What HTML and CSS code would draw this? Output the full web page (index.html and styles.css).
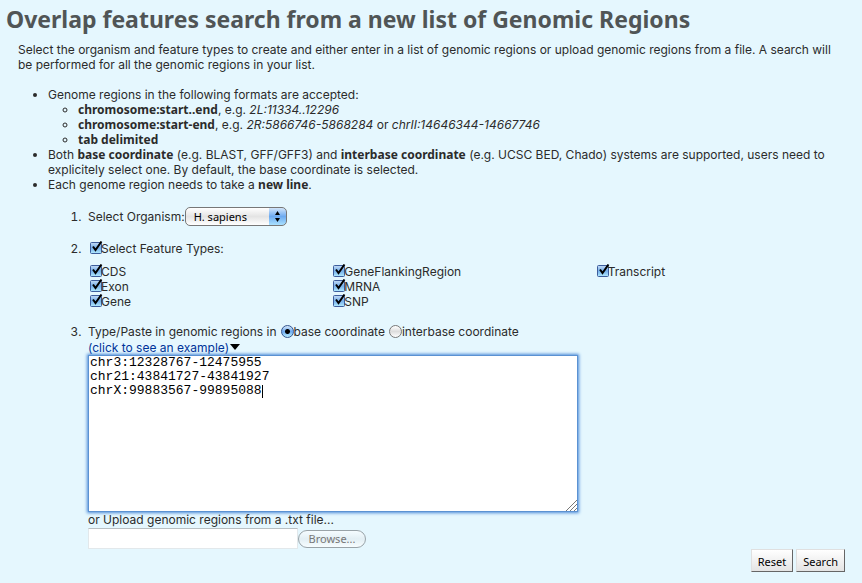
FILE: index.html
```html
<!DOCTYPE html>
<html lang="en">
<head>
<meta charset="utf-8">
<title>Overlap features search</title>
<link rel="stylesheet" href="styles.css">
</head>
<body>
<h1>Overlap features search from a new list of Genomic Regions</h1>
<form class="content">
  <p class="intro">Select the organism and feature types to create and either enter in a list of genomic regions or upload genomic regions from a file. A search will be performed for all the genomic regions in your list.</p>
  <ul class="notes">
    <li>Genome regions in the following formats are accepted:
      <ul class="formats">
        <li><b>chromosome:start..end</b>, e.g. <i>2L:11334..12296</i></li>
        <li><b>chromosome:start-end</b>, e.g. <i>2R:5866746-5868284</i> or <i>chrII:14646344-14667746</i></li>
        <li><b>tab delimited</b></li>
      </ul>
    </li>
    <li>Both <b>base coordinate</b> (e.g. BLAST, GFF/GFF3) and <b>interbase coordinate</b> (e.g. UCSC BED, Chado) systems are supported, users need to explicitely select one. By default, the base coordinate is selected.</li>
    <li>Each genome region needs to take a <b>new line</b>.</li>
  </ul>
  <ol class="steps">
    <li>
      <div class="row organism">
        <label for="organism">Select Organism:</label>
        <select id="organism"><option>H. sapiens</option></select>
      </div>
    </li>
    <li>
      <label class="check"><input type="checkbox" checked>Select Feature Types:</label>
      <div class="features">
        <div>
          <label class="check"><input type="checkbox" checked>CDS</label>
          <label class="check"><input type="checkbox" checked>Exon</label>
          <label class="check"><input type="checkbox" checked>Gene</label>
        </div>
        <div>
          <label class="check"><input type="checkbox" checked>GeneFlankingRegion</label>
          <label class="check"><input type="checkbox" checked>MRNA</label>
          <label class="check"><input type="checkbox" checked>SNP</label>
        </div>
        <div>
          <label class="check"><input type="checkbox" checked>Transcript</label>
        </div>
      </div>
    </li>
    <li>
      <div class="row coordinates">
        <label for="regions">Type/Paste in genomic regions in</label>
        <label class="check"><input type="radio" name="coord" checked>base coordinate</label>
        <label class="check"><input type="radio" name="coord">interbase coordinate</label>
      </div>
      <a class="example" href="#regions">(click to see an example)<svg width="10" height="6" viewBox="0 0 10 6" aria-hidden="true"><path d="M0 0h10L5 6z"/></svg></a>
      <div class="editor">
        <textarea id="regions" spellcheck="false">chr3:12328767-12475955
chr21:43841727-43841927
chrX:99883567-99895088</textarea>
        <span class="caret"></span>
        <svg class="grip" width="11" height="11" viewBox="0 0 11 11" aria-hidden="true"><path d="M0 11L11 0M4 11l7-7M8 11l3-3"/></svg>
      </div>
      <label for="file">or Upload genomic regions from a .txt file...</label>
      <div class="row upload">
        <input type="text" id="file">
        <button type="button" class="browse">Browse...</button>
      </div>
    </li>
  </ol>
  <div class="actions">
    <button type="reset">Reset</button>
    <button type="button">Search</button>
  </div>
</form>
</body>
</html>
```
FILE: styles.css
```css
* { box-sizing: border-box; }

body {
  margin: 0;
  background: #e5f7fe;
  color: #2b2b2b;
  font: 12px/15px Inter, sans-serif;
}

h1 {
  margin: 0;
  padding: 4px 6px 8px;
  color: #505556;
  font: bold 23px/30px "Noto Sans", sans-serif;
}

b { font: bold 12px/1 "Noto Sans", sans-serif; }

.content { padding: 0 17px 11px 18px; }
.intro { margin: 0 0 15px; }
ul, ol { margin: 0; }
.notes { padding-left: 30px; list-style: disc; }
.formats { padding-left: 30px; list-style: circle; }
.steps { padding-left: 70px; margin-top: 15px; }
.steps > li { margin-bottom: 15px; }
.steps > li::marker { content: counter(list-item) ".\a0\a0"; }
.steps > li:last-child { margin-bottom: 0; }

.row { display: flex; align-items: center; }
.check { display: block; }

.features {
  display: grid;
  grid-template-columns: 243fr 263fr 250fr;
  margin-top: 8px;
}

input[type="checkbox"] {
  appearance: none;
  width: 14px;
  height: 15px;
  margin: 0 -2px 0 1px;
  vertical-align: top;
  background: url("data:image/svg+xml,%3Csvg xmlns='http://www.w3.org/2000/svg' width='14' height='15'%3E%3Cdefs%3E%3ClinearGradient id='g' x2='0' y2='1'%3E%3Cstop stop-color='%23c5dcf6'/%3E%3Cstop offset='.5' stop-color='%2374aeea'/%3E%3Cstop offset='1' stop-color='%23b4ecff'/%3E%3C/linearGradient%3E%3C/defs%3E%3Crect x='1.500' y='1.500' width='11' height='11' rx='1' fill='url(%23g)' stroke='%233d5d9c'/%3E%3Cpath d='M4 5.500L6.500 9L12.500 .5' fill='none' stroke='%23000' stroke-width='2'/%3E%3C/svg%3E") no-repeat;
}

input[type="radio"] {
  appearance: none;
  width: 13px;
  height: 13px;
  margin: 1px 0 0;
  vertical-align: top;
  border: 1px solid #777;
  border-radius: 50%;
  background: linear-gradient(#fff, #ddd 50%, #fff);
}

input[type="radio"]:checked {
  border-color: #34558f;
  background: radial-gradient(circle, #000 2px, transparent 3px), linear-gradient(#d5e8fb, #6eaaf0 50%, #b7efff);
}

select {
  appearance: none;
  width: 102px;
  height: 19px;
  padding: 0 22px 0 8px;
  border: 1px solid #777;
  border-radius: 5px;
  color: #000;
  font: 11px/15px "Noto Sans", sans-serif;
  background:
    url("data:image/svg+xml,%3Csvg xmlns='http://www.w3.org/2000/svg' width='17' height='17'%3E%3Cpath d='M6 7L8.500 3L11 7zM6 10L8.500 14L11 10z'/%3E%3C/svg%3E") right / 17px 17px no-repeat,
    linear-gradient(#d2e5fa, #6daaf0 50%, #a9e1ff) right / 17px 100% no-repeat,
    linear-gradient(#fff, #e4e4e4 50%, #fff);
}

.coordinates { flex-wrap: wrap; column-gap: 4px; }

.example { display: block; margin-top: 1px; color: #039; text-decoration: none; }
.example svg { margin-left: 1px; vertical-align: 2px; fill: #000; }

.editor { position: relative; width: 490px; max-width: 100%; }

textarea {
  display: block;
  width: 100%;
  height: 157px;
  padding: 0 1px;
  border: 1px solid #5b92d2;
  outline: 0;
  box-shadow: 0 0 3px 1px #4c8bd8;
  resize: none;
  background: #fff;
  color: #000;
  font: 13px/14px "Liberation Mono", monospace;
}

.caret { position: absolute; top: 30px; left: 174px; width: 1px; height: 13px; background: #000; }
.grip { position: absolute; right: 1px; bottom: 1px; fill: none; stroke: #777; }

.upload { margin-top: 1px; }

input[type="text"] {
  width: 210px;
  height: 21px;
  border: 1px solid #e2e8eb;
  border-top-color: #b8bfc2;
  background: #fff;
}

.browse {
  width: 68px;
  height: 18px;
  padding: 0;
  border: 1px solid #99a3a8;
  border-radius: 9px;
  background: linear-gradient(#f5fcff, #e3eff4 50%, #f7fdff);
  color: #777;
  font: 11px/15px "Noto Sans", sans-serif;
}

.actions { display: flex; justify-content: flex-end; gap: 3px; }

.actions button {
  height: 23px;
  padding: 2px 6px 0;
  border: 1px solid #e0e0e0;
  border-right: 1px solid #666;
  border-bottom: 1px solid #666;
  background: linear-gradient(#fff, #e4e4e4);
  color: #000;
  font: 11px/15px "Noto Sans", sans-serif;
}
```
